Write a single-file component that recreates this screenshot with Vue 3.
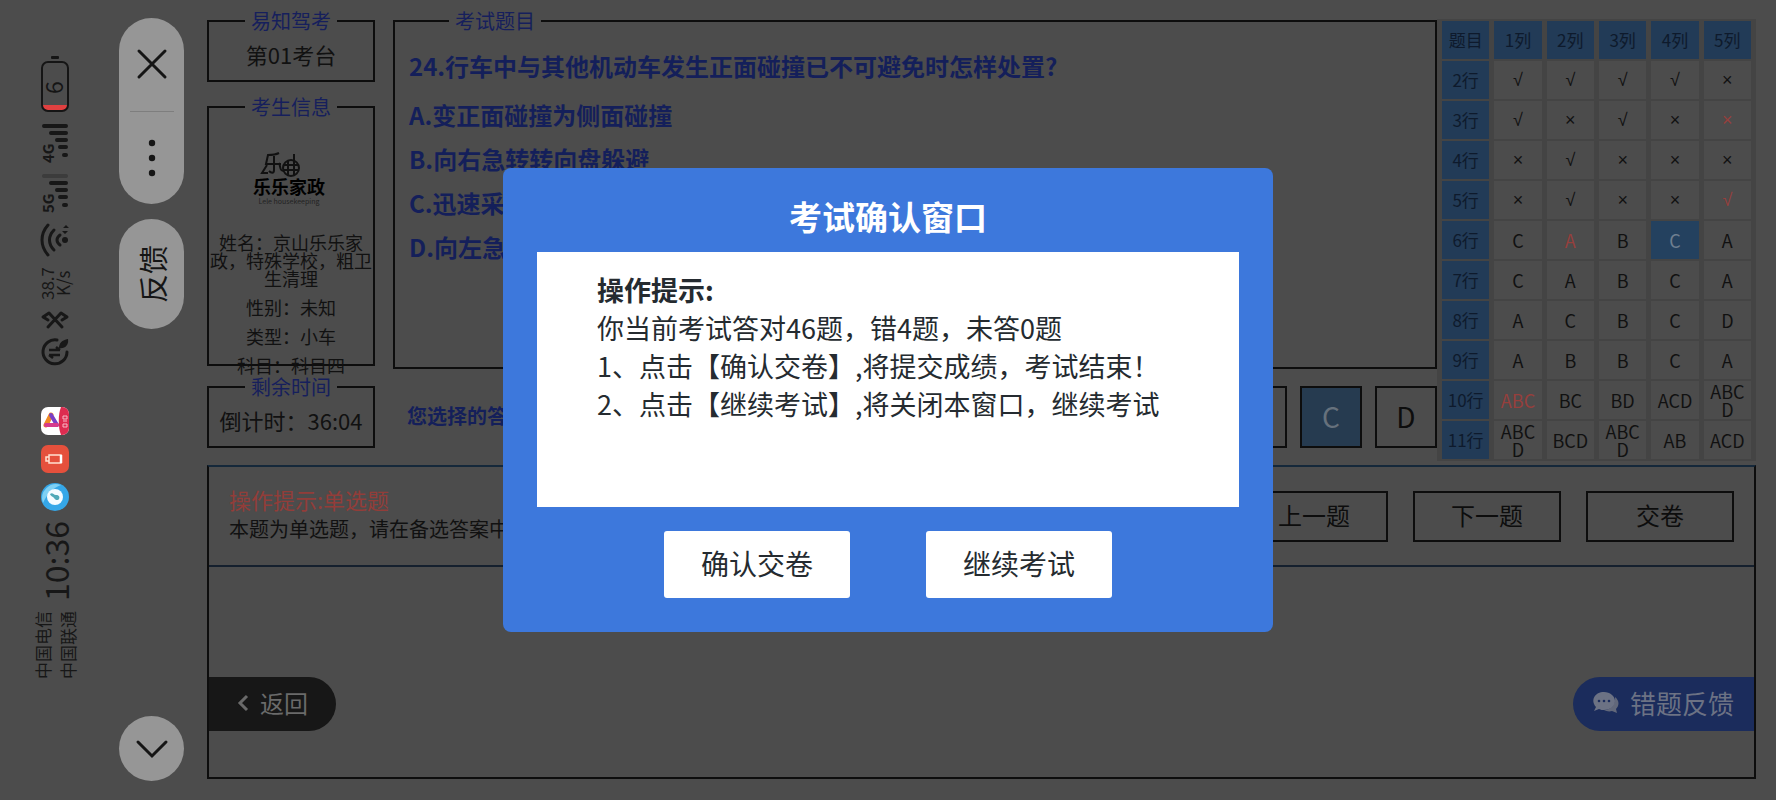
<script setup>
import { ref } from 'vue';

const colonne = ['题目', '1列', '2列', '3列', '4列', '5列'];

// '!' davanti = risposta sbagliata, '*' = domanda corrente
const righe = [
    { nome: '2行', celle: ['√', '√', '√', '√', '×'] },
    { nome: '3行', celle: ['√', '×', '√', '×', '!×'] },
    { nome: '4行', celle: ['×', '√', '×', '×', '×'] },
    { nome: '5行', celle: ['×', '√', '×', '×', '!√'] },
    { nome: '6行', celle: ['C', '!A', 'B', '*C', 'A'] },
    { nome: '7行', celle: ['C', 'A', 'B', 'C', 'A'] },
    { nome: '8行', celle: ['A', 'C', 'B', 'C', 'D'] },
    { nome: '9行', celle: ['A', 'B', 'B', 'C', 'A'] },
    { nome: '10行', celle: ['!ABC', 'BC', 'BD', 'ACD', 'ABCD'] },
    { nome: '11行', celle: ['ABCD', 'BCD', 'ABCD', 'AB', 'ACD'] }
];

const opzioni = [
    'A.变正面碰撞为侧面碰撞',
    'B.向右急转转向盘躲避',
    'C.迅速采取制动措施',
    'D.向左急转转向盘躲避'
];

const scelta = ref('C');
const finestraAperta = ref(true);

const getTesto = (cella) => cella.replace(/[!*]/, '');

const getClasseCella = (cella) => ({
    errata: cella[0] === '!',
    corrente: cella[0] === '*',
    simbolo: /[√×]/.test(cella)
});
</script>

<template>
    <div class="pagina">

        <!-- Barra di stato del telefono, ruotata -->
        <aside class="stato">
            <svg width="30" height="58" viewBox="0 0 30 58">
                <rect x="11" y="1" width="8" height="3" rx="1" fill="#151515" />
                <path d="M2 50h26c0 4-2 6-6 6H8c-4 0-6-2-6-6z" fill="#e04040" />
                <rect x="2" y="7" width="26" height="49" rx="6" fill="none" stroke="#151515" stroke-width="2" />
                <text transform="translate(23 39) rotate(-90)" font-size="23" fill="#151515">6</text>
            </svg>
            <svg width="30" height="40" viewBox="0 0 30 40">
                <g stroke="#171717" stroke-width="4" stroke-linecap="round">
                    <path d="M4 3h22M11 10h15M17 17h9M20 24h6M24 32h2" />
                </g>
                <text transform="translate(14 40) rotate(-90)" font-size="15" font-weight="700" fill="#171717">4G</text>
            </svg>
            <svg width="30" height="40" viewBox="0 0 30 40">
                <path d="M4 3h22" stroke="#3c3c3c" stroke-width="4" stroke-linecap="round" />
                <g stroke="#171717" stroke-width="4" stroke-linecap="round">
                    <path d="M11 10h15M17 17h9M20 24h6M24 32h2" />
                </g>
                <text transform="translate(14 40) rotate(-90)" font-size="15" font-weight="700" fill="#171717">5G</text>
            </svg>
            <svg width="30" height="34" viewBox="0 0 30 34">
                <g fill="none" stroke="#171717" stroke-width="3" stroke-linecap="round">
                    <path d="M8 2c-8 9-8 21 0 30" />
                    <path d="M14 7c-6 6-6 14 0 20" />
                    <path d="M20 12c-4 3-4 7 0 10" />
                </g>
                <circle cx="25" cy="17" r="3" fill="#171717" />
                <path d="M23 5h6l-3-3zM22 8h6l-3 3z" fill="#171717" />
            </svg>
            <div class="ruotato velocita">
                <span>38.7</span>
                <span>K/s</span>
            </div>
            <svg width="28" height="18" viewBox="0 0 28 18">
                <path d="M7 17L20 3l6 4-5 3M21 17L8 3 2 7l5 3" fill="none" stroke="#171717" stroke-width="3"
                    stroke-linecap="round" stroke-linejoin="round" />
            </svg>
            <svg width="28" height="28" viewBox="0 0 28 28">
                <path d="M16 2a12 12 0 1 0 10 12" fill="none" stroke="#171717" stroke-width="3" stroke-linecap="round" />
                <path d="M18 10c0-5 3-8 9-9 1 6-3 10-9 9z" fill="#171717" />
                <path d="M8 17h11M8 17l4 3M19 12H8M19 12l-4-3" fill="none" stroke="#171717" stroke-width="2.5" />
            </svg>

            <svg class="prima-app" width="28" height="28" viewBox="0 0 28 28">
                <rect width="28" height="28" rx="7" fill="#fff" />
                <path d="M20 0h1a7 7 0 0 1 7 7v14a7 7 0 0 1-7 7h-1c-3-7-3-21 0-28z" fill="#dd2c50" />
                <path d="M5 18l5-10" stroke="#f08a24" stroke-width="5" stroke-linecap="round" />
                <path d="M10 8l6 10" stroke="#7b3fc4" stroke-width="4" stroke-linecap="round" />
                <path d="M5 18h11" stroke="#d63a8c" stroke-width="4" stroke-linecap="round" />
                <path d="M22 9h4v3h-4zM22 14h4M22 17h4v3h-4z" fill="none" stroke="#f7b8c6" />
            </svg>
            <svg width="28" height="28" viewBox="0 0 28 28">
                <rect width="28" height="28" rx="7" fill="#e5503c" />
                <rect x="8" y="10" width="12" height="8" fill="none" stroke="#ffe0d0" stroke-width="1.5" />
                <path d="M8 12H5v4h3" fill="none" stroke="#ffe0d0" stroke-width="1.5" />
                <path d="M20 10v8" stroke="#fff" stroke-width="2.5" />
            </svg>
            <svg width="28" height="28" viewBox="0 0 28 28">
                <circle cx="14" cy="14" r="14" fill="#35a7e8" />
                <path d="M2 20A14 14 0 0 1 20 2c-8 3-14 9-18 18z" fill="#7fd0f4" />
                <circle cx="14" cy="14" r="8" fill="#f4fbff" />
                <path d="M9 11c3-2 3 1 6 1s4 2 3 4-4 1-5-1-3-1-4-4z" fill="#4fa9b8" />
            </svg>

            <div class="ruotato ora">10:36</div>
            <div class="ruotato operatori">
                <span>中国电信</span>
                <span>中国联通</span>
            </div>
        </aside>

        <!-- Capsule del mini programma -->
        <nav class="capsule">
            <div class="capsula doppia">
                <button type="button" aria-label="关闭">
                    <svg width="30" height="30" viewBox="0 0 30 30">
                        <path d="M2 2l26 26M28 2L2 28" stroke="#151515" stroke-width="3" stroke-linecap="round" />
                    </svg>
                </button>
                <button type="button" aria-label="更多">
                    <svg width="8" height="38" viewBox="0 0 8 38">
                        <circle cx="4" cy="4" r="3.2" fill="#151515" />
                        <circle cx="4" cy="19" r="3.2" fill="#151515" />
                        <circle cx="4" cy="34" r="3.2" fill="#151515" />
                    </svg>
                </button>
            </div>
            <button type="button" class="capsula feedback"><span class="ruotato">反馈</span></button>
            <button type="button" class="capsula tonda" aria-label="收起">
                <svg width="32" height="18" viewBox="0 0 32 18">
                    <path d="M2 2l14 14L30 2" fill="none" stroke="#151515" stroke-width="3" stroke-linecap="round" />
                </svg>
            </button>
        </nav>

        <main class="esame">
            <div class="superiore">
                <div class="laterale">
                    <fieldset class="riquadro">
                        <legend>易知驾考</legend>
                        <p class="grande">第01考台</p>
                    </fieldset>

                    <fieldset class="riquadro candidato">
                        <legend>考生信息</legend>
                        <svg class="logo" width="90" height="60" viewBox="0 0 90 60">
                            <g fill="none" stroke="#111" stroke-width="2">
                                <path d="M33 3c-4 2-7 2-11 2l-2 9h15M28 6v14c0 4-3 3-5 1M21 15l-5 8h6M33 13c2 4 0 8 5 8" />
                                <circle cx="45" cy="18" r="8" />
                                <path d="M42 10v15M48 4v21M38 15h15M38 20h15" />
                            </g>
                            <text x="43" y="44" text-anchor="middle" font-size="18" font-weight="700">乐乐家政</text>
                            <text x="43" y="54" text-anchor="middle" font-size="7" fill="#222">Lele housekeeping</text>
                        </svg>
                        <div class="dati-candidato">
                            <p>姓名：京山乐乐家<br>政，特殊学校，粗卫<br>生清理</p>
                            <p>性别：未知</p>
                            <p>类型：小车</p>
                            <p>科目：科目四</p>
                        </div>
                    </fieldset>

                    <fieldset class="riquadro">
                        <legend>剩余时间</legend>
                        <p class="grande">倒计时：36:04</p>
                    </fieldset>
                </div>

                <div class="centrale">
                    <fieldset class="riquadro domanda">
                        <legend>考试题目</legend>
                        <h1>24.行车中与其他机动车发生正面碰撞已不可避免时怎样处置?</h1>
                        <p v-for="opzione in opzioni" :key="opzione">{{ opzione }}</p>
                    </fieldset>
                    <div class="risposta">
                        <strong>您选择的答案：</strong>
                        <div class="lettere">
                            <button v-for="l in ['A', 'B', 'C', 'D']" :key="l" type="button"
                                :class="{ scelta: l === scelta }" @click="scelta = l">{{ l }}</button>
                        </div>
                    </div>
                </div>

                <table class="riepilogo">
                    <thead>
                        <tr>
                            <th v-for="c in colonne" :key="c" scope="col">{{ c }}</th>
                        </tr>
                    </thead>
                    <tbody>
                        <tr v-for="riga in righe" :key="riga.nome">
                            <th scope="row">{{ riga.nome }}</th>
                            <td v-for="(cella, index) in riga.celle" :key="index" :class="getClasseCella(cella)">{{
                                getTesto(cella) }}</td>
                        </tr>
                    </tbody>
                </table>
            </div>

            <section class="inferiore">
                <div class="comandi">
                    <div class="suggerimento">
                        <p class="rosso">操作提示:单选题</p>
                        <p>本题为单选题，请在备选答案中选择你认为正确的答案！</p>
                    </div>
                    <div class="pulsanti">
                        <button type="button">上一题</button>
                        <button type="button">下一题</button>
                        <button type="button">交卷</button>
                    </div>
                </div>
                <div class="piede">
                    <button type="button" class="indietro">
                        <svg width="12" height="18" viewBox="0 0 12 18">
                            <path d="M10 2L3 9l7 7" fill="none" stroke="#6a6a6a" stroke-width="3" />
                        </svg>
                        返回
                    </button>
                    <button type="button" class="segnala">
                        <svg width="26" height="22" viewBox="0 0 26 22">
                            <path d="M22 5c5 4 4 9 1 12l1 4-5-2c-3 1-6 0-8-1 7 0 12-6 11-13z" fill="#62687a" />
                            <path d="M11 0c6 0 11 4 11 9s-5 9-11 9c-2 0-3 0-5-1l-5 2 2-4C-3 8 2 0 11 0z" fill="#6c7284" />
                            <g fill="#1b2c5c">
                                <circle cx="6" cy="9" r="1.3" />
                                <circle cx="11" cy="9" r="1.3" />
                                <circle cx="16" cy="9" r="1.3" />
                            </g>
                        </svg>
                        错题反馈
                    </button>
                </div>
            </section>
        </main>

        <!-- Finestra di conferma -->
        <div v-if="finestraAperta" class="velo">
            <div class="finestra" role="dialog" aria-labelledby="titolo-finestra">
                <h2 id="titolo-finestra">考试确认窗口</h2>
                <div class="messaggio">
                    <strong>操作提示:</strong>
                    <p>你当前考试答对46题，错4题，未答0题</p>
                    <p>1、点击【确认交卷】,将提交成绩，考试结束！</p>
                    <p>2、点击【继续考试】,将关闭本窗口，继续考试</p>
                </div>
                <div class="azioni">
                    <button type="button">确认交卷</button>
                    <button type="button" @click="finestraAperta = false">继续考试</button>
                </div>
            </div>
        </div>

    </div>
</template>

<style>
body {
    margin: 0;
    background: #4c4c4c;
}
</style>

<style scoped>
.pagina {
    display: flex;
    min-height: 100vh;
    background: #4c4c4c;
    color: #111;
    font-family: "Noto Sans CJK SC", sans-serif;
}

.pagina * {
    box-sizing: border-box;
}

p,
h1,
h2 {
    margin: 0;
}

button {
    font-family: inherit;
    color: inherit;
    padding: 0 0 3px;
    border: none;
    background: none;
    cursor: pointer;
}

svg {
    display: block;
    flex-shrink: 0;
    overflow: visible;
}

.ruotato {
    writing-mode: vertical-rl;
    text-orientation: sideways;
    transform: rotate(180deg);
    white-space: nowrap;
}

/* barra di stato */
.stato {
    width: 110px;
    flex-shrink: 0;
    display: flex;
    flex-direction: column;
    align-items: center;
    gap: 10px;
    padding-top: 55px;
    color: #171717;
}

.velocita {
    display: flex;
    flex-direction: column;
    font-size: 17px;
    line-height: 16px;
}

.velocita span {
    text-align: center;
}

.prima-app {
    margin-top: 31px;
}

.ora {
    font-size: 32px;
    line-height: 34px;
}

.operatori {
    display: flex;
    flex-direction: column;
    font-size: 17px;
    line-height: 25px;
}

/* capsule */
.capsule {
    width: 83px;
    flex-shrink: 0;
    display: flex;
    flex-direction: column;
    align-items: center;
    gap: 15px;
    padding: 18px 9px 19px;
}

.capsule button {
    padding: 0;
}

.capsula {
    width: 65px;
    border-radius: 33px;
    background: #969696;
    display: flex;
    align-items: center;
    justify-content: center;
}

.doppia {
    height: 186px;
    flex-direction: column;
}

.doppia button {
    flex: 1;
    width: 44px;
    display: flex;
    align-items: center;
    justify-content: center;
}

.doppia button:first-child {
    border-bottom: 1px solid #7e7e7e;
}

.feedback {
    height: 110px;
    font-size: 29px;
    line-height: 40px;
    color: #151515;
}

.tonda {
    height: 65px;
    margin-top: auto;
}

/* area esame */
.esame {
    flex: 1;
    min-width: 0;
    display: flex;
    flex-direction: column;
    gap: 4px;
    padding: 11px 20px 21px 14px;
}

.superiore {
    display: grid;
    grid-template-columns: 168px 1fr 319px;
    align-items: start;
}

.laterale {
    display: flex;
    flex-direction: column;
}

.riquadro {
    margin: 0;
    padding: 0;
    min-width: 0;
    height: 71px;
    border: 2px solid #0d0d0d;
    text-align: center;
}

.riquadro legend {
    margin: 0 auto;
    padding: 0 6px;
    font-size: 20px;
    line-height: 20px;
    color: #161f5c;
}

.grande {
    font-size: 22px;
    line-height: 46px;
}

.candidato {
    height: 269px;
    margin: 15px 0 11px;
}

.logo {
    margin: 33px auto 0;
}

.dati-candidato {
    display: flex;
    flex-direction: column;
    gap: 11px;
    margin-top: 23px;
    font-size: 18px;
    line-height: 18px;
    white-space: nowrap;
}

.centrale {
    display: flex;
    flex-direction: column;
    padding-left: 18px;
}

.domanda {
    height: 358px;
    padding: 0 14px;
    text-align: left;
    color: #141f5a;
}

.domanda legend {
    margin: 0 0 0 40px;
}

.domanda h1 {
    margin: 10px 0 2px;
    font-size: 24px;
    line-height: 50px;
}

.domanda p {
    font-size: 24px;
    font-weight: 700;
    line-height: 44px;
}

.risposta {
    display: flex;
    justify-content: space-between;
    align-items: center;
    margin-top: 17px;
    padding-left: 14px;
    font-size: 20px;
    color: #141f5a;
}

.risposta strong {
    padding-bottom: 4px;
}

.lettere {
    display: flex;
    gap: 13px;
}

.lettere button {
    width: 62px;
    height: 62px;
    border: 2px solid #0d0d0d;
    font-size: 28px;
    color: #0d0d0d;
}

.lettere .scelta {
    background: #263b50;
    color: #66717c;
}

.riepilogo {
    width: 100%;
    margin-top: 8px;
    table-layout: fixed;
    border-collapse: collapse;
    font-size: 18px;
    line-height: 18px;
    text-align: center;
}

.riepilogo tr {
    height: 40px;
}

.riepilogo th,
.riepilogo td {
    padding: 0 4px;
    border: 5px solid #444;
    border-width: 2px 5px;
    word-break: break-all;
}

.riepilogo th {
    padding: 0;
    background: #223b57;
    color: #0e1a2c;
    font-size: 17px;
    font-weight: 400;
}

.riepilogo .simbolo {
    font-family: "Liberation Sans", sans-serif;
}

.riepilogo .errata {
    color: #963f3c;
}

.riepilogo .corrente {
    background: #24415f;
    color: #6f7f90;
}

.inferiore {
    flex: 1;
    display: flex;
    flex-direction: column;
    border: 2px solid #0d0d0d;
    border-top-color: #15283a;
}

.comandi {
    display: flex;
    justify-content: space-between;
    align-items: center;
    height: 100px;
    padding: 0 20px;
    border-bottom: 2px solid #15202e;
}

.suggerimento {
    padding-bottom: 4px;
    font-size: 20px;
    line-height: 28px;
}

.rosso {
    margin-bottom: 2px;
    color: #923d39;
    font-size: 22px;
}

.pulsanti {
    display: flex;
    gap: 25px;
}

.pulsanti button {
    width: 148px;
    height: 51px;
    border: 2px solid #0d0d0d;
    font-size: 24px;
    color: #0d0d0d;
}

.piede {
    flex: 1;
    display: flex;
    justify-content: space-between;
    align-items: flex-end;
    padding-bottom: 46px;
}

.indietro,
.segnala {
    display: flex;
    align-items: center;
    gap: 11px;
    height: 54px;
    font-size: 24px;
}

.indietro {
    padding: 0 28px 3px;
    border-radius: 0 27px 27px 0;
    background: #171717;
    color: #6a6a6a;
}

.segnala {
    padding: 0 20px 3px;
    border-radius: 27px 0 0 27px;
    background: #1b2c5c;
    color: #6c7284;
    font-size: 26px;
}

/* finestra di conferma */
.velo {
    position: fixed;
    inset: 0;
    display: flex;
    align-items: center;
    justify-content: center;
}

.finestra {
    width: 770px;
    padding: 0 34px 34px;
    border-radius: 8px;
    background: #3d78dc;
}

.finestra h2 {
    padding: 23px 0 11px;
    font-size: 33px;
    line-height: 50px;
    text-align: center;
    color: #fff;
}

.messaggio {
    min-height: 255px;
    padding: 19px 60px;
    background: #fff;
    color: #252b30;
    font-size: 27px;
    line-height: 38px;
}

.messaggio p {
    white-space: nowrap;
}

.azioni {
    display: flex;
    justify-content: center;
    gap: 76px;
    margin-top: 24px;
}

.azioni button {
    width: 186px;
    height: 67px;
    border-radius: 3px;
    background: #fff;
    color: #252b30;
    font-size: 28px;
}
</style>
